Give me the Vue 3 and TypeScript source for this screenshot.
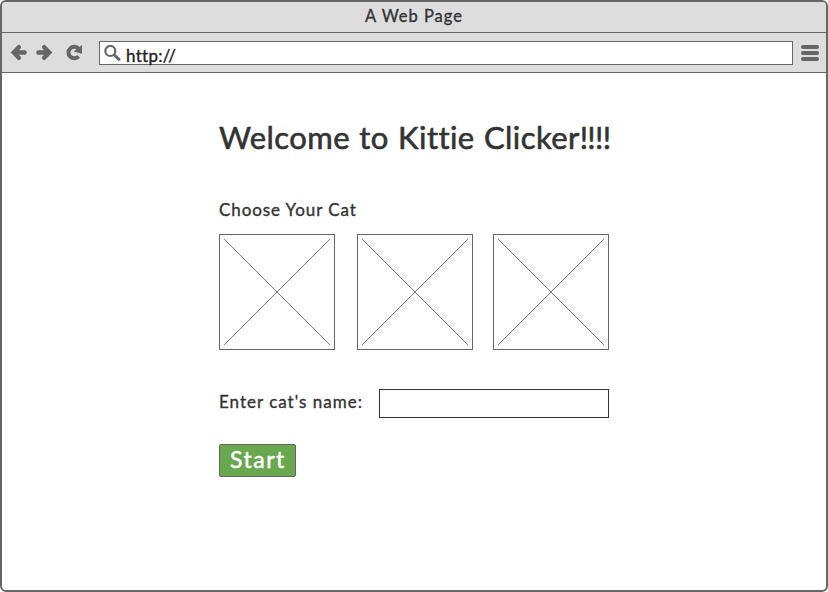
<script setup lang="ts">
import { ref } from 'vue'

const cats: number[] = [1, 2, 3]
const selected = ref<number | null>(null)
const catName = ref<string>('')
</script>

<template>
  <div class="window">
    <header class="titlebar"><span class="page-title">A Web Page</span></header>
    <nav class="toolbar">
      <svg class="nav-icons" width="80" height="20" viewBox="0 0 80 20">
        <g fill="none" stroke="#666" stroke-width="4.4" stroke-linecap="round">
          <path d="M8.8 4.2 L3.7 9.5 L8.8 14.8 M5 9.5 H14.6" />
          <path d="M34.2 4.2 L39.3 9.5 L34.2 14.8 M38 9.5 H28.4" />
        </g>
        <path d="M68.6 5.6 A5.8 5.8 0 1 0 68.6 13.4" fill="none" stroke="#666" stroke-width="4" />
        <path d="M72 2 V10.8 L63.6 8.4 Z" fill="#666" />
      </svg>
      <div class="address">
        <svg class="search" width="18" height="18" viewBox="0 0 18 18" fill="none" stroke="#666">
          <circle cx="6.3" cy="6" r="5" stroke-width="2.2" />
          <path d="M10.3 10 L15 14.3" stroke-width="3" stroke-linecap="round" />
        </svg>
        <span class="url">http:<span class="slashes">//</span></span>
      </div>
      <div class="burger"><i></i><i></i><i></i></div>
    </nav>
    <main class="content">
      <h1>Welcome to Kittie Clicker<span class="bangs">!!!!</span></h1>
      <h2>Choose Your Cat</h2>
      <div class="cats">
        <div v-for="cat in cats" :key="cat" class="cat" @click="selected = cat">
          <svg width="114" height="114" viewBox="0 0 114 114">
            <path d="M4 4 L110 110 M110 4 L4 110" stroke="#777" stroke-width="1" />
          </svg>
        </div>
      </div>
      <div class="name-row">
        <label for="cat-name">Enter cat's name:</label>
        <input id="cat-name" v-model="catName" type="text" />
      </div>
      <button type="button"><span>Start</span></button>
    </main>
  </div>
</template>

<style>
body { margin: 0; background: #fff; }
</style>

<style scoped>
.window {
  box-sizing: border-box;
  width: 828px;
  height: 592px;
  border: 2px solid #666;
  border-radius: 6px;
  overflow: hidden;
  background: #fff;
  color: #333;
  font-family: Lato, "Liberation Sans", sans-serif;
  font-size: 17px;
  -webkit-text-stroke: 0.35px currentColor;
  white-space: nowrap;
}
.titlebar {
  box-sizing: border-box;
  height: 31px;
  border-bottom: 1px solid #666;
  background: #ddd;
  display: flex;
  justify-content: center;
}
.page-title { line-height: 28px; letter-spacing: 1px; font-size: 16.5px; }
.toolbar {
  box-sizing: border-box;
  height: 40px;
  border-bottom: 1px solid #666;
  background: #ddd;
  display: flex;
  align-items: flex-start;
  padding: 8px 7px 0 8px;
}
.nav-icons { margin: 2px 9px 0 0; flex: none; }
.address {
  box-sizing: border-box;
  width: 694px;
  height: 24px;
  border: 1px solid #666;
  background: #fff;
  display: flex;
  flex: none;
}
.search { margin: 3px 4px 0 4px; flex: none; }
.url { line-height: 28px; letter-spacing: 0.3px; color: #222; }
.slashes { letter-spacing: 1.6px; }
.burger { margin: 4px 0 0 8px; display: flex; flex-direction: column; gap: 2px; }
.burger i { display: block; width: 18px; height: 4px; border-radius: 2px; background: #666; }
.content { width: 390px; padding: 44px 0 0 217px; }
h1 {
  margin: 0;
  font-size: 31px;
  font-weight: 400;
  line-height: 40px;
  letter-spacing: 0.42px;
  word-spacing: 1px;
  -webkit-text-stroke: 0.6px currentColor;
}
.bangs { letter-spacing: -0.7px; }
h2 { margin: 43px 0 0; font-size: 17px; font-weight: 400; line-height: 20px; letter-spacing: 0.92px; }
.cats { display: grid; grid-template-columns: 138px 136px 116px; margin-top: 14px; }
.cat { box-sizing: border-box; width: 116px; height: 116px; border: 1px solid #666; }
.cat svg { display: block; }
.name-row { display: flex; justify-content: space-between; width: 390px; height: 29px; margin-top: 39px; }
label { line-height: 26px; letter-spacing: 1px; }
input {
  box-sizing: border-box;
  width: 230px;
  height: 29px;
  border: 1px solid #333;
  background: #fff;
  padding: 0 6px;
  font: inherit;
  outline: none;
}
button {
  display: flex;
  justify-content: center;
  box-sizing: border-box;
  width: 77px;
  height: 33px;
  margin-top: 26px;
  padding: 0 0 2px 1px;
  border: 1px solid #666;
  border-radius: 2px;
  background: #6aa84f;
  color: #fff;
  font: 400 23px/29px Lato, "Liberation Sans", sans-serif;
  letter-spacing: 1.5px;
  -webkit-text-stroke: 0.5px currentColor;
}
</style>
